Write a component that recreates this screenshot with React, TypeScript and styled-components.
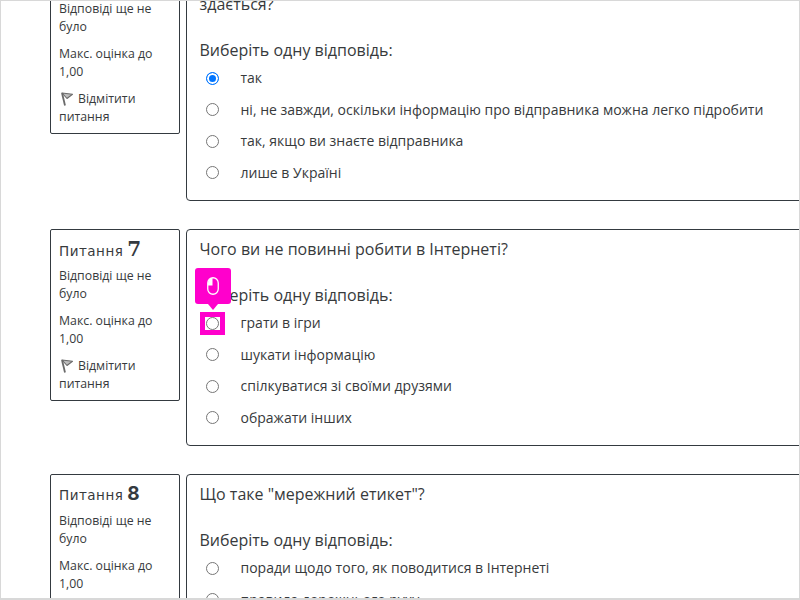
import React from "react";
import styled, { createGlobalStyle } from "styled-components";

const Global = createGlobalStyle`
  html, body { margin: 0; padding: 0; background: #fff; height: 100%; overflow: hidden; }
  * { box-sizing: border-box; }
`;

const Frame = styled.div`
  width: 800px;
  height: 600px;
  border: 1px solid #d8d8d8;
  border-width: 1px 1px 2px 1px;
  overflow: hidden;
  background: #fff;
  font-family: "Open Sans", "Noto Sans", sans-serif;
  color: #373a3c;
`;

const List = styled.div`
  margin-top: -39px;
  padding-left: 49px;
  width: 830px;
  display: flex;
  flex-direction: column;
  gap: 28px;
`;

const Question = styled.section`
  display: flex;
  align-items: flex-start;
  gap: 6px;
`;

const Info = styled.aside`
  flex: 0 0 130px;
  border: 1px solid #343a40;
  border-radius: 2px;
  padding: 8px 8px 7px;
  font-size: 12.3px;
  line-height: 18px;
`;

const InfoHead = styled.h3`
  margin: 0 0 7px;
  font-family: "DejaVu Sans", sans-serif;
  font-weight: 400;
  font-size: 13.5px;
  letter-spacing: 0.5px;
  word-spacing: -1px;
  line-height: 22px;
  height: 22px;
  white-space: nowrap;
`;

const Num = styled.span<{ $serif?: boolean }>`
  font-family: ${(p) => (p.$serif ? '"DejaVu Serif", serif' : '"Inter", sans-serif')};
  font-weight: 700;
  font-size: ${(p) => (p.$serif ? 20 : 19)}px;
  letter-spacing: 0;
  color: #343a40;
`;

const InfoLine = styled.p`
  margin: 0 0 9px;
`;

const FlagLine = styled.p`
  margin: 0;
`;

const FlagIcon = styled.svg`
  width: 12px;
  height: 14px;
  vertical-align: -3px;
  margin: 0 5px 0 2px;
`;

const Content = styled.div<{ $h: number }>`
  flex: 1;
  min-width: 0;
  border: 1px solid #343a40;
  border-radius: 4px;
  padding: 8px 12.5px 0;
  height: ${(p) => p.$h}px;
`;

const Prompt = styled.div`
  font-size: 16px;
  line-height: 22px;
  margin-bottom: 23px;
  white-space: pre-line;
`;

const Choose = styled.div`
  font-size: 16px;
  line-height: 24px;
  height: 24px;
`;

const Answers = styled.div``;

const Answer = styled.label`
  display: flex;
  align-items: center;
  height: 31.5px;
  padding-left: 6px;
  font-size: 14px;
  white-space: nowrap;
`;

const RadioWrap = styled.span`
  position: relative;
  flex: 0 0 13px;
  width: 13px;
  height: 13px;
  margin: 1px 22px 0 0;
`;

const Radio = styled.span<{ $on?: boolean }>`
  display: block;
  position: relative;
  width: 13px;
  height: 13px;
  border-radius: 50%;
  background: #fff;
  border: 1px solid ${(p) => (p.$on ? "#0075ff" : "#767676")};
  ${(p) => p.$on && "box-shadow: inset 0 0 0 2px #fff; background: #0075ff;"}
`;

const Highlight = styled.span`
  position: absolute;
  inset: 0 -1px 0 -1px;
  outline: 5px solid #ff00cc;
  background: #fff;
`;

const Tip = styled.div`
  position: absolute;
  left: -11px;
  top: -49px;
  width: 36px;
  height: 36px;
  background: #ff00cc;
  border-radius: 3px;
  display: flex;
  align-items: center;
  justify-content: center;
  &::after {
    content: "";
    position: absolute;
    left: 13px;
    bottom: -6px;
    border-left: 5px solid transparent;
    border-right: 5px solid transparent;
    border-top: 6px solid #ff00cc;
  }
`;

const MouseIcon = () => (
  <svg width="12" height="18" viewBox="0 0 12 18" fill="none">
    <rect x="0.75" y="0.75" width="10.5" height="16.5" rx="5.25" stroke="#fff" strokeWidth="1.3" />
    <path d="M5.5 1 C3 1 1 3 1 6 V8.5 H5.5 Z" fill="#fff" />
  </svg>
);

const Flag = () => (
  <FlagIcon viewBox="0 0 12 14" fill="none">
    <path d="M1 1 L11.5 2.2 L6 6.5 Z" fill="#bdbdbd" stroke="#6a6a6a" strokeWidth="1.1" strokeLinejoin="round" />
    <path d="M1 1 L4 13.5" stroke="#6a6a6a" strokeWidth="1.8" />
  </FlagIcon>
);

type Q = {
  num: string;
  serif?: boolean;
  prompt: string;
  height: number;
  answers: string[];
  selected?: number;
  hi?: number;
};

const data: Q[] = [
  {
    num: "6",
    prompt: "Чи завжди повідомлення надійшло від того, від кого, як\nздається?",
    height: 239,
    answers: [
      "так",
      "ні, не завжди, оскільки інформацію про відправника можна легко підробити",
      "так, якщо ви знаєте відправника",
      "лише в Україні",
    ],
    selected: 0,
  },
  {
    num: "7",
    serif: true,
    prompt: "Чого ви не повинні робити в Інтернеті?",
    height: 217,
    answers: ["грати в ігри", "шукати інформацію", "спілкуватися зі своїми друзями", "ображати інших"],
    hi: 0,
  },
  {
    num: "8",
    prompt: 'Що таке "мережний етикет"?',
    height: 217,
    answers: ["поради щодо того, як поводитися в Інтернеті", "правила дорожнього руху"],
  },
];

export default function App() {
  return (
    <Frame>
      <Global />
      <List>
        {data.map((q) => (
          <Question key={q.prompt}>
            <Info>
              <InfoHead>
                Питання <Num $serif={q.serif}>{q.num}</Num>
              </InfoHead>
              <InfoLine>Відповіді ще не було</InfoLine>
              <InfoLine>Макс. оцінка до 1,00</InfoLine>
              <FlagLine>
                <Flag />
                Відмітити питання
              </FlagLine>
            </Info>
            <Content $h={q.height}>
              <Prompt>{q.prompt}</Prompt>
              <Choose>Виберіть одну відповідь:</Choose>
              <Answers>
                {q.answers.map((a, i) => (
                  <Answer key={a}>
                    <RadioWrap>
                      {q.hi === i && <Highlight />}
                      <Radio $on={q.selected === i} />
                      {q.hi === i && (
                        <Tip>
                          <MouseIcon />
                        </Tip>
                      )}
                    </RadioWrap>
                    {a}
                  </Answer>
                ))}
              </Answers>
            </Content>
          </Question>
        ))}
      </List>
    </Frame>
  );
}
